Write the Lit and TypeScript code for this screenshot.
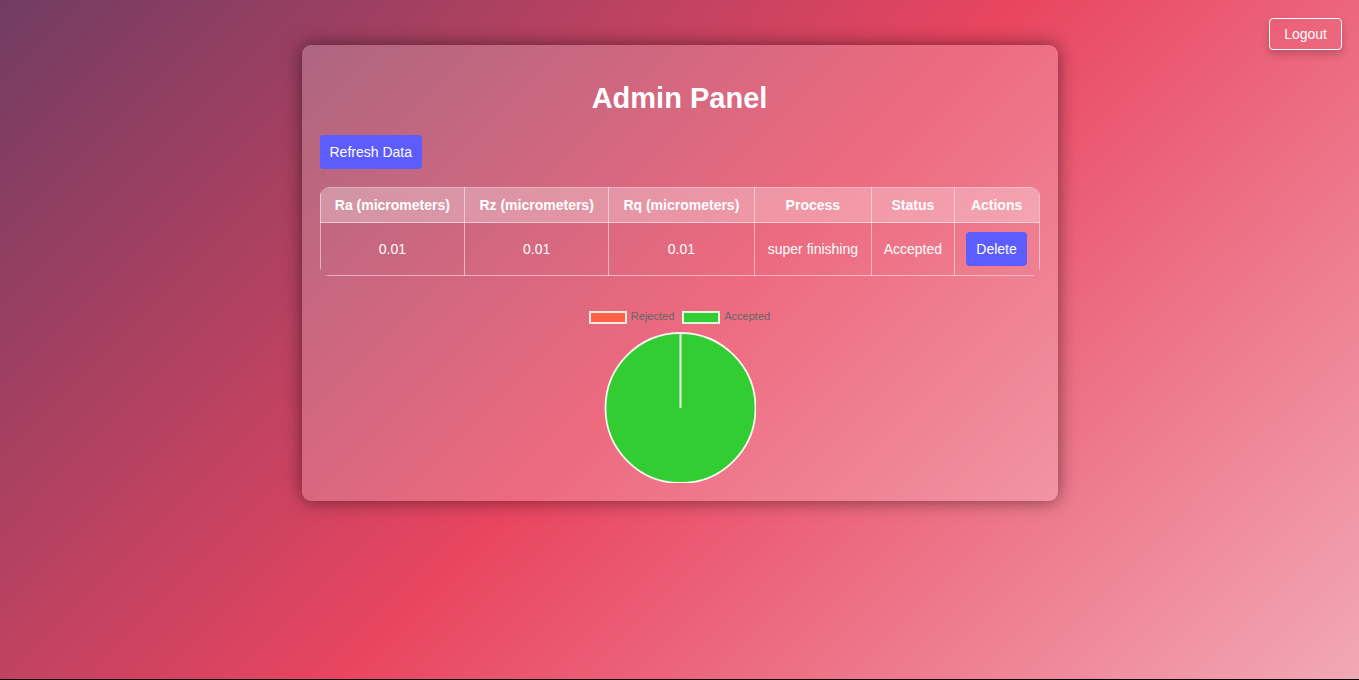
import { LitElement, html, css } from "lit";
import { customElement, state } from "lit/decorators.js";

interface Measurement {
  ra: number;
  rz: number;
  rq: number;
  process: string;
  status: "Accepted" | "Rejected";
}

@customElement("status-chart")
class StatusChart extends LitElement {
  static styles = css`
    :host {
      display: block;
    }
    .chart {
      display: flex;
      flex-direction: column;
      align-items: center;
      gap: 8px;
      margin: 0;
    }
    .legend {
      display: flex;
      gap: 8px;
      margin: 0;
      padding: 0;
      list-style: none;
      color: #666;
      font-size: 11px;
      line-height: 11px;
    }
    .entry {
      display: flex;
      gap: 4px;
    }
    .swatch {
      box-sizing: border-box;
      width: 38px;
      height: 13px;
      border: 2px solid rgba(255, 255, 255, 0.85);
    }
    .rejected {
      background: #ff6347;
    }
    .accepted {
      background: #32cd32;
    }
    .pie {
      display: block;
      width: 152px;
      height: 151px;
    }
  `;

  render() {
    return html`
      <figure class="chart">
        <ul class="legend">
          <li class="entry"><span class="swatch rejected"></span>Rejected</li>
          <li class="entry"><span class="swatch accepted"></span>Accepted</li>
        </ul>
        <svg class="pie" viewBox="0 0 152 151" role="img" aria-label="Accepted 100%, Rejected 0%">
          <circle cx="76.5" cy="76" r="75" fill="#32cd32" stroke="#fff" stroke-opacity="0.9" stroke-width="1.8" />
          <path d="M76.5 1V76" stroke="#fff" stroke-opacity="0.9" stroke-width="2" />
        </svg>
      </figure>
    `;
  }
}

@customElement("app-root")
class AppRoot extends LitElement {
  static styles = css`
    :host {
      display: block;
      box-sizing: border-box;
      min-height: 100vh;
      border-bottom: 1px solid #000;
      background: linear-gradient(135deg, #713c62, #e94560 50%, #f2a8b5) no-repeat padding-box;
      color: #fff;
      font-family: "Liberation Sans", Arial, sans-serif;
      font-size: 14px;
      line-height: 16px;
    }
    .page {
      display: grid;
      grid-template-columns: 1fr minmax(0, 756px) 1fr;
      align-items: start;
    }
    .panel {
      grid-column: 2;
      box-sizing: border-box;
      margin: 45px 0;
      padding: 18px;
      border-radius: 9px;
      background: rgba(255, 255, 255, 0.2);
      box-shadow: 0 0 18px rgba(0, 0, 0, 0.5);
    }
    .title {
      margin: 19px 0 21px;
      font-size: 29px;
      line-height: 32px;
      text-align: center;
    }
    button {
      font: inherit;
      color: inherit;
      cursor: pointer;
      white-space: nowrap;
    }
    .action {
      padding: 9px 10px;
      border: 0;
      border-radius: 4px;
      background: #5c5cff;
    }
    .logout {
      justify-self: end;
      margin: 18px 17px 0 0;
      padding: 7px 14px;
      border: 1px solid #fff;
      border-radius: 4px;
      background: transparent;
      box-shadow: 0 4px 8px rgba(0, 0, 0, 0.2);
    }
    .records {
      width: 100%;
      margin: 18px 0 35px;
      border-collapse: collapse;
      border-radius: 9px;
      overflow: hidden;
      text-align: center;
    }
    .records th,
    .records td {
      padding: 9px 8px;
      border: 1px solid rgba(255, 255, 255, 0.5);
    }
    .records th {
      background: rgba(255, 255, 255, 0.3);
    }
  `;

  @state() private rows: Measurement[] = [
    { ra: 0.01, rz: 0.01, rq: 0.01, process: "super finishing", status: "Accepted" },
  ];

  render() {
    return html`
      <div class="page">
        <main class="panel">
          <h1 class="title">Admin Panel</h1>
          <button class="action" type="button">Refresh Data</button>
          <table class="records">
            <thead>
              <tr>
                <th scope="col">Ra (micrometers)</th>
                <th scope="col">Rz (micrometers)</th>
                <th scope="col">Rq (micrometers)</th>
                <th scope="col">Process</th>
                <th scope="col">Status</th>
                <th scope="col">Actions</th>
              </tr>
            </thead>
            <tbody>
              ${this.rows.map(
                (row) => html`
                  <tr>
                    <td>${row.ra}</td>
                    <td>${row.rz}</td>
                    <td>${row.rq}</td>
                    <td>${row.process}</td>
                    <td>${row.status}</td>
                    <td><button class="action" type="button">Delete</button></td>
                  </tr>
                `
              )}
            </tbody>
          </table>
          <status-chart></status-chart>
        </main>
        <button class="logout" type="button">Logout</button>
      </div>
    `;
  }
}
